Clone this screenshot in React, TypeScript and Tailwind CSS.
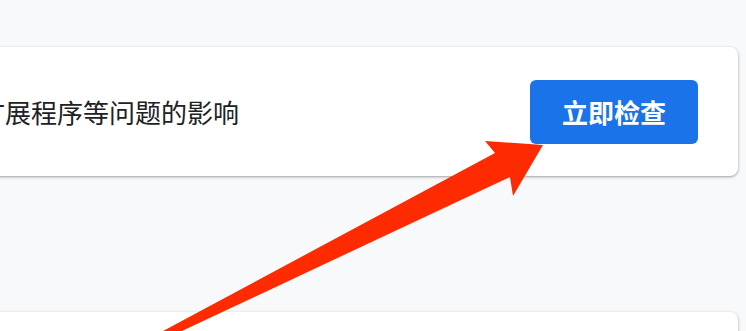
import React from "react"

const cardShadow =
    "shadow-[0_1px_2px_rgba(60,64,67,0.3),0_1px_3px_1px_rgba(60,64,67,0.15)]"

export default function App() {
    return (
        <div
            className="relative w-[746px] h-[331px] overflow-hidden bg-[#f8f9fa] pt-[47px]"
            style={{ fontFamily: '"Noto Sans CJK SC", "Noto Sans", sans-serif' }}
        >
            {/* Check card */}
            <div className={`-ml-8 mr-2 h-[129px] rounded-lg bg-white flex items-center justify-between pl-[11px] pr-10 ${cardShadow}`}>
                <p className="text-[26px] leading-none text-[#202124] whitespace-nowrap">
                    扩展程序等问题的影响
                </p>
                <button className="w-[168px] h-[64px] rounded-md bg-[#1a73e8] text-white text-[26px] font-bold leading-none">
                    立即检查
                </button>
            </div>

            {/* Next card */}
            <div className={`-ml-8 mr-2 mt-[136px] h-[120px] rounded-lg bg-white ${cardShadow}`}></div>

            {/* Annotation arrow */}
            <svg
                className="absolute inset-0 pointer-events-none"
                width="746"
                height="331"
                viewBox="0 0 746 331"
            >
                <polygon
                    points="150,338 495,153 485,141 543,145 513,196 510,177 167,338"
                    fill="#fe2b00"
                />
            </svg>
        </div>
    )
}
